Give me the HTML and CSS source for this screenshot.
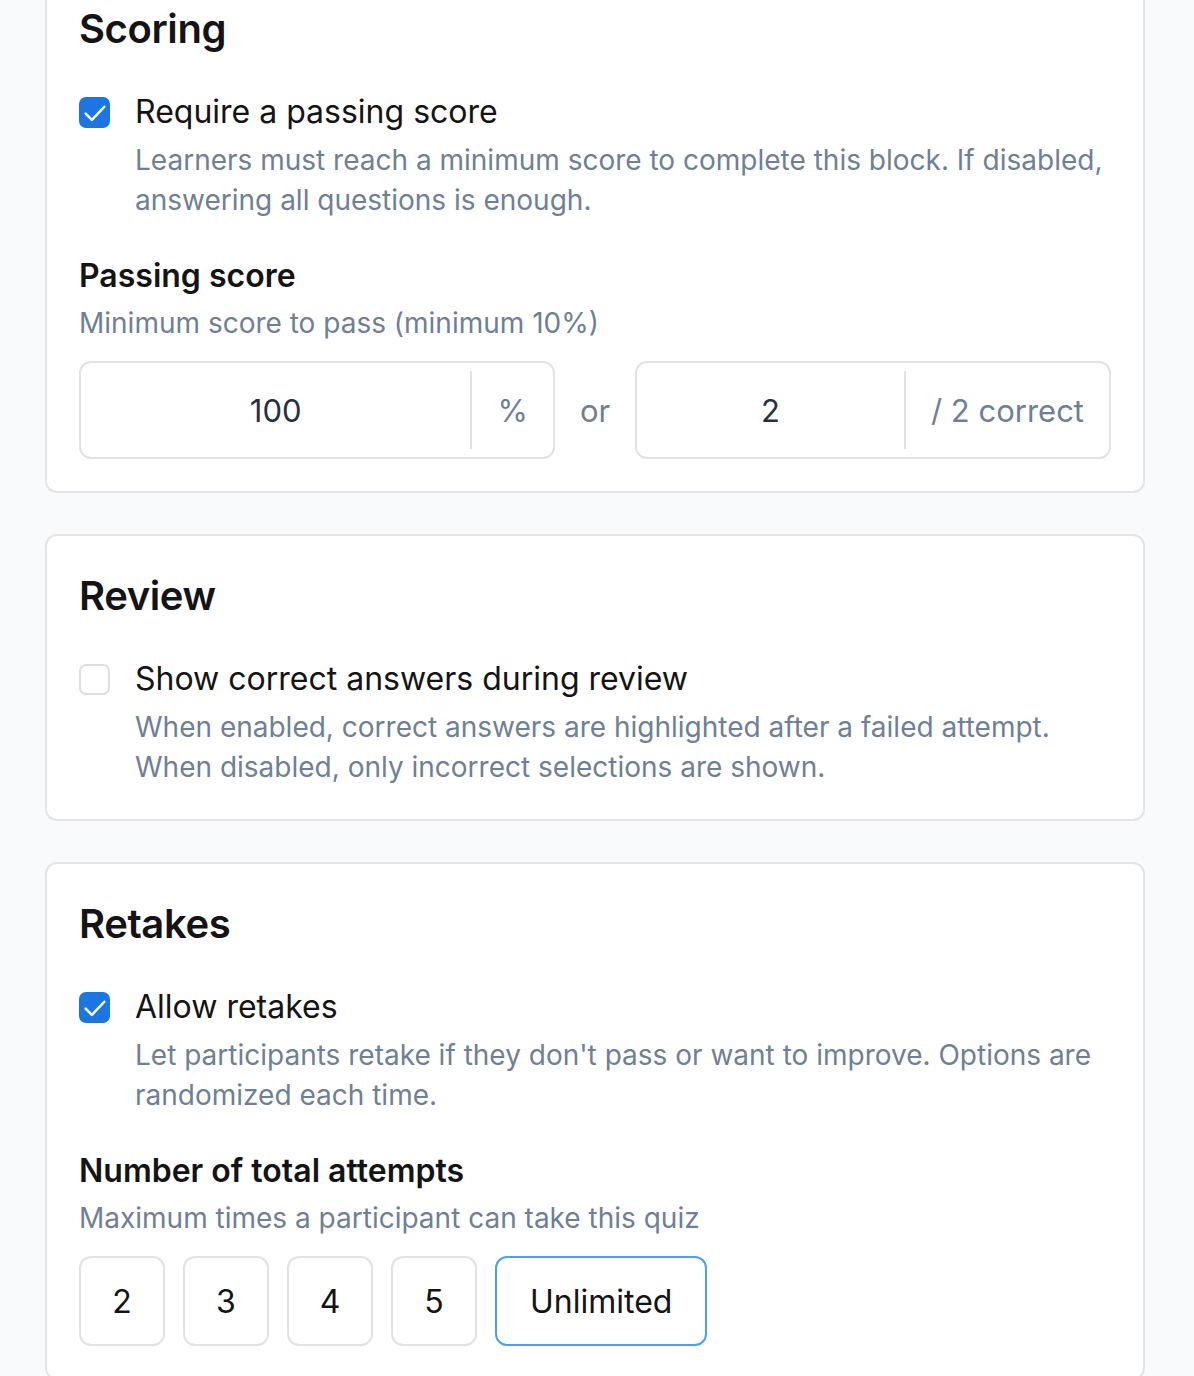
FILE: index.html
```html
<!DOCTYPE html>
<html lang="en">
<head>
<meta charset="utf-8">
<title>Quiz settings</title>
<link rel="stylesheet" href="styles.css">
</head>
<body>
<main class="settings">
  <section class="card">
    <h2 class="card-title">Scoring</h2>
    <div class="check-row">
      <span class="checkbox checked">
        <svg class="check-icon" viewBox="0 0 24 24"><path d="M4.5 12.5l5 5L19.5 7" fill="none" stroke="#fff" stroke-width="2" stroke-linecap="round" stroke-linejoin="round"/></svg>
      </span>
      <div class="check-text">
        <div class="check-label">Require a passing score</div>
        <p class="desc">Learners must reach a minimum score to complete this block. If disabled, answering all questions is enough.</p>
      </div>
    </div>
    <div class="field">
      <div class="field-label">Passing score</div>
      <p class="field-desc">Minimum score to pass (minimum 10%)</p>
      <div class="score-row">
        <div class="input-box">
          <span class="input-value">100</span>
          <span class="input-suffix">%</span>
        </div>
        <span class="or">or</span>
        <div class="input-box">
          <span class="input-value">2</span>
          <span class="input-suffix">/ 2 correct</span>
        </div>
      </div>
    </div>
  </section>

  <section class="card">
    <h2 class="card-title">Review</h2>
    <div class="check-row">
      <span class="checkbox"></span>
      <div class="check-text">
        <div class="check-label">Show correct answers during review</div>
        <p class="desc">When enabled, correct answers are highlighted after a failed attempt. When disabled, only incorrect selections are shown.</p>
      </div>
    </div>
  </section>

  <section class="card">
    <h2 class="card-title">Retakes</h2>
    <div class="check-row">
      <span class="checkbox checked">
        <svg class="check-icon" viewBox="0 0 24 24"><path d="M4.5 12.5l5 5L19.5 7" fill="none" stroke="#fff" stroke-width="2" stroke-linecap="round" stroke-linejoin="round"/></svg>
      </span>
      <div class="check-text">
        <div class="check-label">Allow retakes</div>
        <p class="desc">Let participants retake if they don't pass or want to improve. Options are randomized each time.</p>
      </div>
    </div>
    <div class="field">
      <div class="field-label">Number of total attempts</div>
      <p class="field-desc">Maximum times a participant can take this quiz</p>
      <div class="attempts">
        <button class="attempt">2</button>
        <button class="attempt">3</button>
        <button class="attempt">4</button>
        <button class="attempt">5</button>
        <button class="attempt wide selected">Unlimited</button>
      </div>
    </div>
  </section>
</main>
</body>
</html>
```

FILE: styles.css
```css
* { box-sizing: border-box; }
html, body { margin: 0; padding: 0; }
body {
  background: #f9fafc;
  font-family: Inter, "Noto Sans", sans-serif;
  color: #18181b;
}
.settings {
  width: 1100px;
  margin: -33px 0 0 45px;
  display: flex;
  flex-direction: column;
  gap: 41px;
}
.card {
  background: #fff;
  border: 2px solid #e4e4e7;
  border-radius: 12px;
  padding: 36px 32px 32px;
}
.card-title {
  margin: 0;
  font-size: 40px;
  line-height: 48px;
  font-weight: 600;
  color: #141416;
  letter-spacing: -0.4px;
}
.check-row {
  display: flex;
  align-items: flex-start;
  gap: 25px;
  margin-top: 39px;
}
.checkbox {
  flex: none;
  width: 31px;
  height: 31px;
  margin-top: 5px;
  border-radius: 7px;
  border: 2px solid #dedede;
  background: #fff;
  display: flex;
  align-items: center;
  justify-content: center;
}
.checkbox.checked {
  background: #1b76e4;
  border-color: #1b76e4;
}
.check-icon {
  width: 30px;
  height: 30px;
  flex: none;
}
.check-label {
  font-size: 32px;
  line-height: 40px;
  color: #141416;
}
.desc {
  margin: 8px 0 0;
  font-size: 28px;
  line-height: 40px;
  color: #6f7f96;
}
.field { margin-top: 36px; }
.field-label {
  font-size: 32px;
  line-height: 40px;
  font-weight: 600;
  color: #141416;
}
.field-desc {
  margin: 7px 0 0;
  font-size: 28px;
  line-height: 40px;
  color: #6f7f96;
}
.score-row {
  display: flex;
  align-items: center;
  gap: 25px;
  margin-top: 18px;
}
.input-box {
  flex: 1;
  height: 98px;
  border: 2px solid #e2e2e2;
  border-radius: 12px;
  display: flex;
  align-items: stretch;
  font-size: 31px;
}
.input-value {
  flex: 1;
  display: flex;
  align-items: center;
  justify-content: center;
  color: #27303f;
}
.input-suffix {
  display: flex;
  align-items: center;
  padding: 0 25px;
  margin: 8px 0;
  border-left: 2px solid #e2e2e2;
  color: #6f7f96;
}
.or {
  font-size: 31px;
  color: #6f7f96;
}
.attempts {
  display: flex;
  gap: 18px;
  margin-top: 18px;
}
.attempt {
  width: 86px;
  height: 90px;
  padding: 0;
  background: #fff;
  border: 2px solid #e2e2e2;
  border-radius: 12px;
  font-family: Inter, "Noto Sans", sans-serif;
  font-size: 32px;
  color: #141416;
  display: flex;
  align-items: center;
  justify-content: center;
}
.attempt.wide {
  width: auto;
  padding: 0 33px;
}
.attempt.selected {
  border-color: #4d9ff5;
}
```
